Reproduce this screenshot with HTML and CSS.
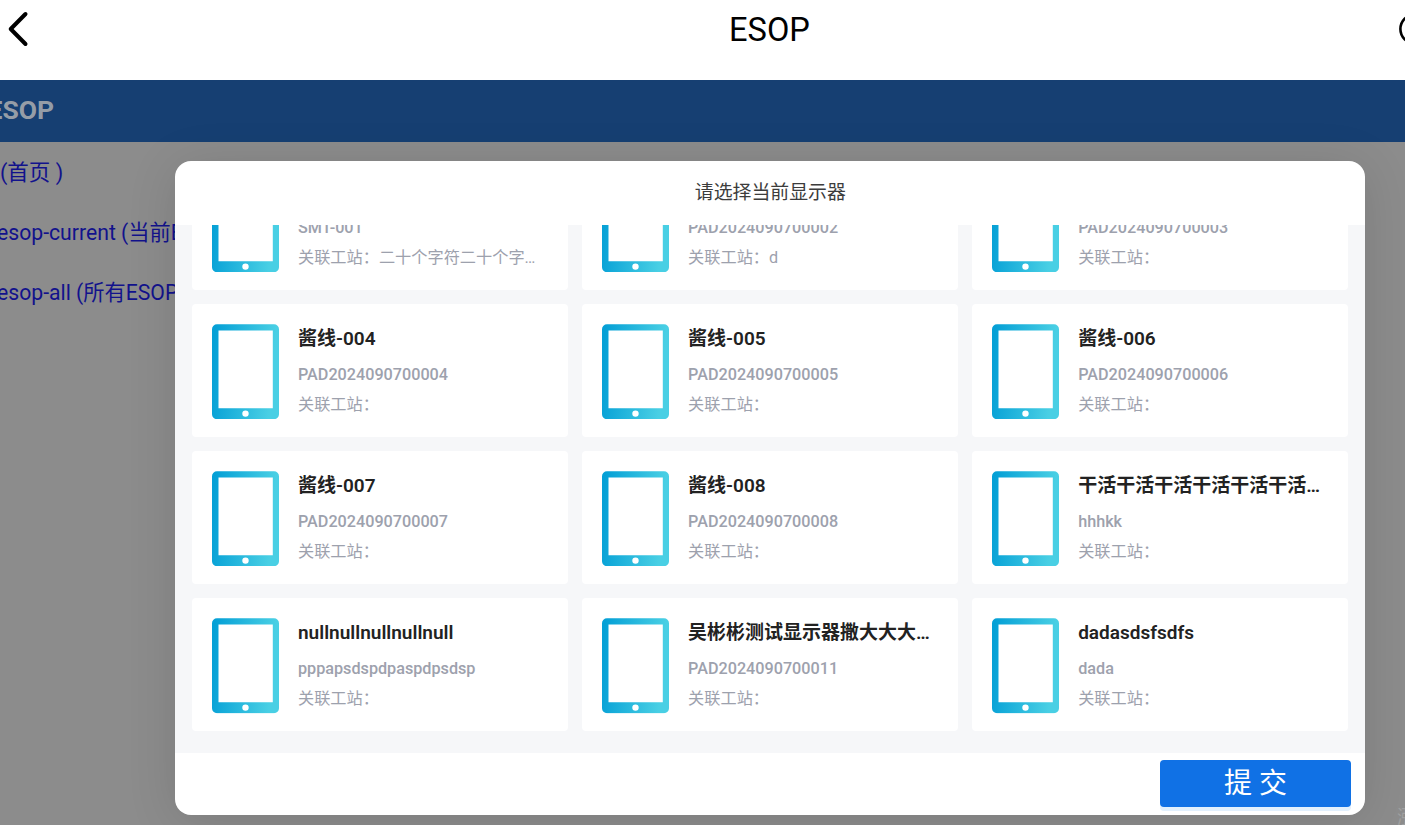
FILE: index.html
```html
<!DOCTYPE html>
<html lang="zh-CN">
<head>
<meta charset="utf-8">
<title>ESOP</title>
<link rel="stylesheet" href="styles.css">
</head>
<body>
<svg class="defs" width="0" height="0">
  <defs>
    <linearGradient id="pad-fill" x1="0" y1="0" x2="1" y2="0.12">
      <stop offset="0.05" stop-color="#05a0d6"/>
      <stop offset="0.95" stop-color="#49cfe4"/>
    </linearGradient>
    <symbol id="pad" viewBox="0 0 67 95">
      <path fill="url(#pad-fill)" fill-rule="evenodd" d="M5 0H62A5 5 0 0 1 67 5V90A5 5 0 0 1 62 95H5A5 5 0 0 1 0 90V5A5 5 0 0 1 5 0ZM6.5 6.3V84H60.8V6.3ZM33.5 86.2A3.2 3.2 0 1 0 33.5 92.6A3.2 3.2 0 1 0 33.5 86.2Z"/>
    </symbol>
  </defs>
</svg>
<header class="topbar">
  <svg class="back" width="24" height="38" viewBox="0 0 24 38"><path d="M19.5 5L4.7 20L19.5 35" fill="none" stroke="#000" stroke-width="4" stroke-linecap="round" stroke-linejoin="round"/></svg>
  <h1 class="topbar-title">ESOP</h1>
  <svg class="more" width="6" height="30" viewBox="0 0 6 30"><circle cx="16" cy="15" r="14.6" fill="none" stroke="#000" stroke-width="2.6"/></svg>
</header>
<div class="page">
  <div class="banner">ESOP</div>
  <nav class="links">
    <a class="link link-home">(首页 )</a>
    <a class="link">esop-current (当前ESOP)</a>
    <a class="link">esop-all (所有ESOP)</a>
  </nav>
  <span class="watermark">涨</span>
</div>
<section class="modal">
  <h2 class="modal-title">请选择当前显示器</h2>
  <div class="modal-body">
    <div class="grid">
      <article class="card"><svg class="pad"><use href="#pad"/></svg><div class="info"><b class="name"></b><span class="code">SMT-001</span><span class="station">关联工站：二十个字符二十个字符二十个字符</span></div></article>
      <article class="card"><svg class="pad"><use href="#pad"/></svg><div class="info"><b class="name"></b><span class="code">PAD2024090700002</span><span class="station">关联工站：d</span></div></article>
      <article class="card"><svg class="pad"><use href="#pad"/></svg><div class="info"><b class="name"></b><span class="code">PAD2024090700003</span><span class="station">关联工站：</span></div></article>
      <article class="card"><svg class="pad"><use href="#pad"/></svg><div class="info"><b class="name">酱线-004</b><span class="code">PAD2024090700004</span><span class="station">关联工站：</span></div></article>
      <article class="card"><svg class="pad"><use href="#pad"/></svg><div class="info"><b class="name">酱线-005</b><span class="code">PAD2024090700005</span><span class="station">关联工站：</span></div></article>
      <article class="card"><svg class="pad"><use href="#pad"/></svg><div class="info"><b class="name">酱线-006</b><span class="code">PAD2024090700006</span><span class="station">关联工站：</span></div></article>
      <article class="card"><svg class="pad"><use href="#pad"/></svg><div class="info"><b class="name">酱线-007</b><span class="code">PAD2024090700007</span><span class="station">关联工站：</span></div></article>
      <article class="card"><svg class="pad"><use href="#pad"/></svg><div class="info"><b class="name">酱线-008</b><span class="code">PAD2024090700008</span><span class="station">关联工站：</span></div></article>
      <article class="card"><svg class="pad"><use href="#pad"/></svg><div class="info"><b class="name">干活干活干活干活干活干活干活干活</b><span class="code">hhhkk</span><span class="station">关联工站：</span></div></article>
      <article class="card"><svg class="pad"><use href="#pad"/></svg><div class="info"><b class="name">nullnullnullnullnull</b><span class="code">pppapsdspdpaspdpsdsp</span><span class="station">关联工站：</span></div></article>
      <article class="card"><svg class="pad"><use href="#pad"/></svg><div class="info"><b class="name">吴彬彬测试显示器撒大大大大大大</b><span class="code">PAD2024090700011</span><span class="station">关联工站：</span></div></article>
      <article class="card"><svg class="pad"><use href="#pad"/></svg><div class="info"><b class="name">dadasdsfsdfs</b><span class="code">dada</span><span class="station">关联工站：</span></div></article>
    </div>
  </div>
  <footer class="modal-footer"><button class="submit" type="button">提 交</button></footer>
</section>
</body>
</html>
```

FILE: styles.css
```css
* { box-sizing: border-box; }
body {
  margin: 0;
  width: 1405px;
  height: 825px;
  overflow: hidden;
  position: relative;
  background: #8c8c8c;
  font-family: Roboto, "Noto Sans CJK SC", sans-serif;
}
.defs { position: absolute; }
.topbar {
  height: 79.5px;
  background: #fff;
  display: grid;
  grid-template-columns: 30px 1fr 6px;
  align-items: start;
}
.back { margin: 9px 0 0 6px; }
.topbar-title {
  margin: 10px 0 0 110px;
  font-size: 32.6px;
  line-height: 40px;
  font-weight: 400;
  text-align: center;
  color: #000;
}
.more { margin-top: 14px; }
.banner {
  height: 62px;
  background: #163f72;
  color: #959da7;
  font-size: 26.5px;
  font-weight: 700;
  line-height: 60px;
  text-indent: -12.5px;
}
.links { display: flex; flex-direction: column; padding-top: 1.5px; }
.link {
  height: 60px;
  line-height: 60px;
  font-size: 21.2px;
  color: #12128c;
  white-space: nowrap;
  margin-left: -3px;
}
.link-home { margin-left: 0; font-size: 21.5px; }
.watermark {
  position: absolute;
  left: 1397px;
  top: 807px;
  font-size: 19px;
  line-height: 22px;
  color: #a0a0a0;
}
.modal {
  position: absolute;
  left: 175.3px;
  top: 160.8px;
  width: 1190px;
  height: 653.8px;
  border-radius: 16px;
  background: #fff;
  box-shadow: 0 6px 50px rgba(0, 0, 0, 0.12);
  overflow: hidden;
  display: flex;
  flex-direction: column;
}
.modal-title {
  margin: 0;
  height: 64px;
  line-height: 63px;
  text-align: center;
  font-size: 18.9px;
  font-weight: 400;
  color: #3c3c3c;
}
.modal-body {
  height: 528.2px;
  background: #f6f7f9;
  overflow: hidden;
  display: flex;
  flex-direction: column;
  justify-content: flex-end;
  padding: 0 17px 21.6px 16.7px;
}
.grid {
  display: grid;
  grid-template-columns: repeat(3, 376px);
  grid-auto-rows: 133px;
  gap: 14.3px 14.1px;
}
.card {
  background: #fff;
  border-radius: 4px;
  padding: 20px;
  display: flex;
  gap: 19px;
}
.pad { width: 67px; height: 95.4px; flex: none; }
.info { width: 245px; display: flex; flex-direction: column; }
.name, .code, .station { overflow: hidden; white-space: nowrap; text-overflow: ellipsis; flex: none; }
.name {
  height: 28px;
  line-height: 29px;
  margin-bottom: 8px;
  font-size: 19px;
  font-weight: 600;
  color: #222;
}
.code { line-height: 30px; height: 30px; font-size: 16.2px; font-weight: 500; color: #9da1ad; }
.station { line-height: 30px; height: 30px; font-size: 16.2px; color: #9da1ad; }
.modal-footer {
  flex: 1;
  display: flex;
  justify-content: flex-end;
  padding: 7px 14.3px 0 0;
}
.submit {
  width: 191px;
  height: 47.5px;
  border: 0;
  border-radius: 4px;
  background: #1071e5;
  box-shadow: 0 4px 0 #e2f0fd;
  color: #fff;
  font-family: inherit;
  font-size: 28px;
  line-height: 45px;
  padding: 0;
}
```
